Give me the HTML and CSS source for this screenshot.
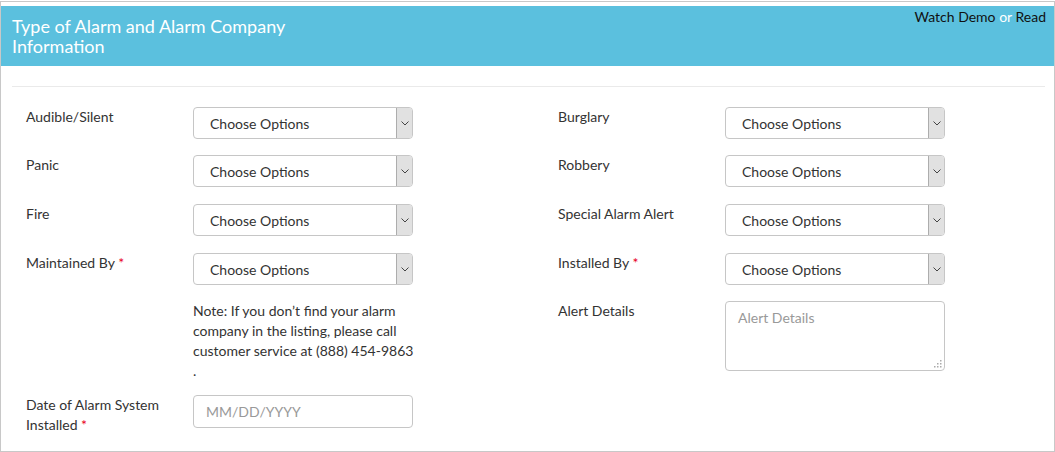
FILE: index.html
```html
<!DOCTYPE html>
<html>
<head>
<meta charset="utf-8">
<link rel="stylesheet" href="styles.css">
</head>
<body>
<div class="frame">
  <div class="header">
    <h2 class="title">Type of Alarm and Alarm Company Information</h2>
    <div class="links"><a class="link">Watch Demo</a> <span class="or">or</span> <a class="link">Read</a></div>
  </div>
  <div class="body">
    <hr class="divider">
    <div class="form">
      <div class="col col-left">
        <div class="row">
          <label class="label">Audible/Silent</label>
          <div class="select"><span class="select-text">Choose Options</span><span class="arrow"><svg width="8" height="5" viewBox="0 0 8 5"><path d="M0.5 0.5 L4 4 L7.5 0.5" fill="none" stroke="#444" stroke-width="1"/></svg></span></div>
        </div>
        <div class="row">
          <label class="label">Panic</label>
          <div class="select"><span class="select-text">Choose Options</span><span class="arrow"><svg width="8" height="5" viewBox="0 0 8 5"><path d="M0.5 0.5 L4 4 L7.5 0.5" fill="none" stroke="#444" stroke-width="1"/></svg></span></div>
        </div>
        <div class="row">
          <label class="label">Fire</label>
          <div class="select"><span class="select-text">Choose Options</span><span class="arrow"><svg width="8" height="5" viewBox="0 0 8 5"><path d="M0.5 0.5 L4 4 L7.5 0.5" fill="none" stroke="#444" stroke-width="1"/></svg></span></div>
        </div>
        <div class="row row-note">
          <label class="label">Maintained By <span class="req">*</span></label>
          <div class="field">
            <div class="select"><span class="select-text">Choose Options</span><span class="arrow"><svg width="8" height="5" viewBox="0 0 8 5"><path d="M0.5 0.5 L4 4 L7.5 0.5" fill="none" stroke="#444" stroke-width="1"/></svg></span></div>
            <p class="note">Note: If you don’t find your alarm company in the listing, please call customer service at (888)&nbsp;454-9863 .</p>
          </div>
        </div>
        <div class="row">
          <label class="label">Date of Alarm System Installed <span class="req">*</span></label>
          <input class="input" type="text" placeholder="MM/DD/YYYY">
        </div>
      </div>
      <div class="col col-right">
        <div class="row">
          <label class="label">Burglary</label>
          <div class="select"><span class="select-text">Choose Options</span><span class="arrow"><svg width="8" height="5" viewBox="0 0 8 5"><path d="M0.5 0.5 L4 4 L7.5 0.5" fill="none" stroke="#444" stroke-width="1"/></svg></span></div>
        </div>
        <div class="row">
          <label class="label">Robbery</label>
          <div class="select"><span class="select-text">Choose Options</span><span class="arrow"><svg width="8" height="5" viewBox="0 0 8 5"><path d="M0.5 0.5 L4 4 L7.5 0.5" fill="none" stroke="#444" stroke-width="1"/></svg></span></div>
        </div>
        <div class="row">
          <label class="label">Special Alarm Alert</label>
          <div class="select"><span class="select-text">Choose Options</span><span class="arrow"><svg width="8" height="5" viewBox="0 0 8 5"><path d="M0.5 0.5 L4 4 L7.5 0.5" fill="none" stroke="#444" stroke-width="1"/></svg></span></div>
        </div>
        <div class="row">
          <label class="label">Installed By <span class="req">*</span></label>
          <div class="select"><span class="select-text">Choose Options</span><span class="arrow"><svg width="8" height="5" viewBox="0 0 8 5"><path d="M0.5 0.5 L4 4 L7.5 0.5" fill="none" stroke="#444" stroke-width="1"/></svg></span></div>
        </div>
        <div class="row">
          <label class="label">Alert Details</label>
          <div class="textarea-wrap">
            <textarea class="textarea" placeholder="Alert Details"></textarea>
            <svg class="grip" width="8" height="8" viewBox="0 0 8 8"><rect x="6" y="0" width="1.5" height="1.5" fill="#aaa"/><rect x="3" y="3" width="1.5" height="1.5" fill="#aaa"/><rect x="6" y="3" width="1.5" height="1.5" fill="#aaa"/><rect x="0" y="6" width="1.5" height="1.5" fill="#aaa"/><rect x="3" y="6" width="1.5" height="1.5" fill="#aaa"/><rect x="6" y="6" width="1.5" height="1.5" fill="#aaa"/></svg>
          </div>
        </div>
      </div>
    </div>
  </div>
</div>
</body>
</html>
```
FILE: styles.css
```css
html, body {
  margin: 0;
  padding: 0;
  background: #fff;
}
body {
  font-family: Lato, "Open Sans", sans-serif;
  font-size: 14px;
  line-height: 20px;
  color: #333;
}
.frame {
  margin-top: 1px;
  width: 1055px;
  height: 451px;
  box-sizing: border-box;
  border: 1px solid #c8c8c8;
  padding-top: 4px;
  overflow: hidden;
}
.header {
  background: #5bc0de;
  height: 60px;
  display: flex;
  justify-content: space-between;
  align-items: flex-start;
  padding: 0 8px 0 11px;
}
.title {
  margin: 0;
  padding-top: 10px;
  width: 300px;
  font-size: 18px;
  line-height: 20px;
  font-weight: normal;
  color: #fff;
}
.links {
  padding-top: 2px;
  font-size: 14px;
  line-height: 18px;
  color: #111;
}
.link {
  color: #111;
  text-decoration: none;
}
.or {
  color: #fff;
}
.body {
  padding: 0 9px 0 11px;
}
.divider {
  margin: 20px 0 0;
  border: 0;
  border-top: 1px solid #eaeaea;
  height: 0;
}
.form {
  display: flex;
  padding: 20px 0 0 14px;
}
.col-left {
  width: 532px;
}
.row {
  display: flex;
  align-items: flex-start;
  margin-bottom: 16px;
}
.row:nth-child(2),
.row:nth-child(3) {
  margin-bottom: 17px;
}
.row-note {
  margin-bottom: 14px;
}
.label {
  width: 167px;
  flex-shrink: 0;
  color: #333;
}
.req {
  color: #e8001c;
}
.field {
  width: 220px;
}
.select {
  width: 220px;
  height: 32px;
  box-sizing: border-box;
  border: 1px solid #c6c6c6;
  border-radius: 4px;
  display: flex;
  background: #fff;
}
.select-text {
  flex: 1;
  padding-left: 16px;
  line-height: 31px;
  color: #333;
}
.arrow {
  width: 15px;
  background: #e1e1e1;
  border-left: 1px solid #adadad;
  border-radius: 0 3px 3px 0;
  display: flex;
  align-items: center;
  justify-content: center;
}
.arrow svg {
  display: block;
}
.note {
  margin: 16px 0 0;
  width: 226px;
  line-height: 20px;
}
.input {
  width: 220px;
  height: 33px;
  box-sizing: border-box;
  border: 1px solid #c6c6c6;
  border-radius: 4px;
  padding: 0 12px;
  margin: 0;
  font-family: Lato, "Open Sans", sans-serif;
  font-size: 14px;
  color: #333;
  outline: none;
}
.textarea-wrap {
  position: relative;
  width: 220px;
  height: 70px;
}
.textarea {
  width: 220px;
  height: 70px;
  box-sizing: border-box;
  border: 1px solid #c6c6c6;
  border-radius: 4px;
  padding: 6px 12px;
  font-family: Lato, "Open Sans", sans-serif;
  font-size: 14px;
  line-height: 20px;
  color: #333;
  outline: none;
  margin: 0;
  display: block;
  resize: none;
}
.grip {
  position: absolute;
  right: 3px;
  bottom: 3px;
}
.input::placeholder,
.textarea::placeholder {
  color: #999;
}
```
